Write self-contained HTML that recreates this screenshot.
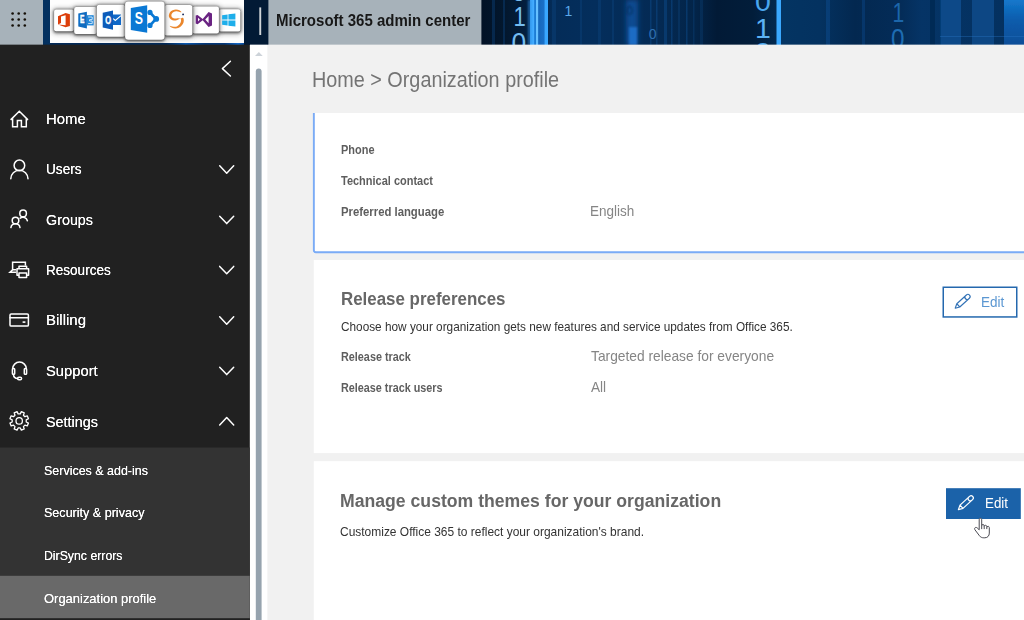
<!DOCTYPE html>
<html lang="en">
<head>
<meta charset="utf-8">
<title>Microsoft 365 admin center</title>
<style>
*{box-sizing:border-box;margin:0;padding:0}
html,body{width:1024px;height:620px;overflow:hidden;background:#f1f1f1;font-family:"Liberation Sans",sans-serif;}
#app{position:relative;width:1024px;height:620px;overflow:hidden;background:#f1f1f1}
.abs{position:absolute}
.t{position:absolute;white-space:nowrap;line-height:40px;height:40px;transform-origin:0 0}
svg{position:absolute;left:0;top:0;overflow:visible}
svg text{font-family:"Liberation Sans",sans-serif}
.ico{fill:none;stroke:#fff;stroke-width:1.5;stroke-linecap:round;stroke-linejoin:round}
</style>
</head>
<body>
<div id="app">

<!-- HEADER -->
<svg id="hdr" width="1024" height="45" viewBox="0 0 1024 45">
<defs>
  <linearGradient id="hbg" x1="0" x2="1" y1="0" y2="0">
    <stop offset="0" stop-color="#021226"/>
    <stop offset=".47" stop-color="#021226"/>
    <stop offset=".495" stop-color="#03182f"/>
    <stop offset=".515" stop-color="#031f40"/>
    <stop offset=".54" stop-color="#042c58"/>
    <stop offset=".58" stop-color="#042e5c"/>
    <stop offset=".64" stop-color="#042a54"/>
    <stop offset=".68" stop-color="#032448"/>
    <stop offset=".70" stop-color="#021a36"/>
    <stop offset=".735" stop-color="#021d3a"/>
    <stop offset=".757" stop-color="#03284e"/>
    <stop offset=".763" stop-color="#043462"/>
    <stop offset=".80" stop-color="#043260"/>
    <stop offset=".835" stop-color="#032850"/>
    <stop offset=".88" stop-color="#042c58"/>
    <stop offset=".90" stop-color="#053466"/>
    <stop offset="1" stop-color="#04305e"/>
  </linearGradient>
  <linearGradient id="band" x1="0" x2="1" y1="0" y2="0">
    <stop offset="0" stop-color="#3aa4fa"/>
    <stop offset=".2" stop-color="#44acff"/>
    <stop offset=".26" stop-color="#1c7cd4"/>
    <stop offset=".32" stop-color="#1c7cd4"/>
    <stop offset=".36" stop-color="#66c0ff"/>
    <stop offset=".43" stop-color="#66c0ff"/>
    <stop offset=".48" stop-color="#1668bc"/>
    <stop offset=".78" stop-color="#1a70c8"/>
    <stop offset=".84" stop-color="#38a6ff"/>
    <stop offset="1" stop-color="#3aa8ff"/>
  </linearGradient>
  <linearGradient id="uline" x1="0" x2="1" y1="0" y2="0">
    <stop offset="0" stop-color="#032a58"/><stop offset=".6" stop-color="#032a58"/><stop offset=".7" stop-color="#0a58b0"/><stop offset=".8" stop-color="#053878"/><stop offset=".9" stop-color="#053878"/><stop offset=".97" stop-color="#1268c8"/><stop offset="1" stop-color="#0a4a98"/>
  </linearGradient>
  <linearGradient id="corner" x1="0" x2="0" y1="0" y2="1"><stop offset="0" stop-color="#1478cc"/><stop offset=".45" stop-color="#0b5cac"/><stop offset="1" stop-color="#084e98"/></linearGradient>
  <filter id="blur05" x="-10%" y="-10%" width="120%" height="120%"><feGaussianBlur stdDeviation="0.7 0"/></filter>
  <filter id="blur1" x="-50%" y="-50%" width="200%" height="200%"><feGaussianBlur stdDeviation="1.2"/></filter>
  <filter id="blur2" x="-50%" y="-50%" width="200%" height="200%"><feGaussianBlur stdDeviation="2.5"/></filter>
  <filter id="tsh" x="-30%" y="-30%" width="160%" height="170%"><feGaussianBlur stdDeviation="0.9"/></filter>
  <filter id="tsh2" x="-50%" y="-50%" width="200%" height="200%"><feGaussianBlur stdDeviation="2.6"/></filter>
  <clipPath id="hclip"><rect x="0" y="0" width="1024" height="45"/></clipPath>
  <clipPath id="sclip"><rect x="50" y="0" width="194" height="43"/></clipPath>
</defs>
<g clip-path="url(#hclip)">
<rect x="0" y="0" width="1024" height="45" fill="url(#hbg)"/>
<!-- stripes -->
<g opacity=".5">
<rect x="492" y="0" width="3" height="45" fill="#0a3c70"/>
<rect x="503" y="0" width="2" height="45" fill="#0a3c70"/>
<rect x="552" y="0" width="4" height="45" fill="#0a4078"/>
<rect x="580" y="0" width="2" height="45" fill="#0a4078"/>
<rect x="598" y="0" width="3" height="45" fill="#0a4078"/>
<rect x="612" y="0" width="2" height="45" fill="#0a4078"/>
<rect x="650" y="0" width="1.5" height="45" fill="#0c4a8a"/>
<rect x="656" y="0" width="1.5" height="45" fill="#0c4a8a"/>
<rect x="664" y="0" width="3" height="45" fill="#0c4a8a"/>
<rect x="671" y="0" width="1.5" height="45" fill="#0c4a8a"/>
<rect x="686" y="0" width="1.5" height="45" fill="#0c4a8a"/>
<rect x="693" y="0" width="1.5" height="45" fill="#0a3c70"/>
<rect x="678" y="0" width="2" height="45" fill="#0a3c70"/>
<rect x="700" y="0" width="3" height="45" fill="#093868"/>
<rect x="826" y="0" width="4" height="45" fill="#0c4c90"/>
<rect x="862" y="0" width="3" height="45" fill="#0a4484"/>
</g>
<!-- bright band -->
<rect x="530" y="0" width="18" height="45" fill="url(#band)"/>
<rect x="528" y="0" width="3" height="45" fill="#2a88dc" opacity=".6" filter="url(#blur1)"/>
<!-- blurry band -->
<rect x="626" y="0" width="12" height="45" fill="#0d4c92" filter="url(#blur2)"/>
<rect x="629" y="27" width="8" height="18" fill="#1a6cc4" filter="url(#blur1)"/>
<text x="626" y="15" font-size="13" fill="#062c58" filter="url(#blur1)">0</text>
<!-- bright line -->
<rect x="776.5" y="0" width="4.5" height="45" fill="#3aa8ff"/>
<g filter="url(#blur05)">
<rect x="930" y="0" width="5" height="45" fill="#032a54"/>
<rect x="940.5" y="0" width="20.5" height="45" fill="#0a4888"/>
<rect x="972" y="0" width="22" height="45" fill="#094684"/>
<rect x="1004" y="0" width="24" height="45" fill="url(#corner)"/>
</g>
<rect x="940" y="36" width="90" height="1" fill="#2a78c8" opacity=".35"/>
<!-- digits -->
<text transform="translate(513.4,25.8) scale(.8,1)" font-size="27.6" fill="#74bcf0">1</text>
<text transform="translate(511.6,53.2) scale(.88,1)" font-size="30" fill="#74bcf0">0</text>
<text transform="translate(511.6,1) scale(.88,1)" font-size="30" fill="#74bcf0">0</text>
<text x="564.5" y="15.8" font-size="14" fill="#5aa8ea">1</text>
<text x="648.8" y="39" font-size="14" fill="#2f6fb0">0</text>
<text x="755" y="10.6" font-size="28.5" fill="#4aa6ee">0</text>
<text x="755" y="37.5" font-size="28.5" fill="#5cb2f4">1</text>
<text x="755" y="62" font-size="28.5" fill="#4aa6ee">0</text>
<text transform="translate(892.6,21.9) scale(.78,1)" font-size="27" fill="#1c66aa">1</text>
<text transform="translate(891,48) scale(.9,1)" font-size="27" fill="#1e6cb2">0</text>
<!-- waffle -->
<rect x="0" y="0" width="43" height="45" fill="#a7b2ba"/>
<g fill="#140e06">
<circle cx="12.6" cy="13.5" r="1.3"/><circle cx="18.7" cy="13.5" r="1.3"/><circle cx="24.8" cy="13.5" r="1.3"/>
<circle cx="12.6" cy="19.5" r="1.3"/><circle cx="18.7" cy="19.5" r="1.3"/><circle cx="24.8" cy="19.5" r="1.3"/>
<circle cx="12.6" cy="25.5" r="1.3"/><circle cx="18.7" cy="25.5" r="1.3"/><circle cx="24.8" cy="25.5" r="1.3"/>
</g>
<rect x="43" y="0" width="7" height="45" fill="#03305f"/>
<rect x="50" y="43" width="194" height="2" fill="url(#uline)"/>
<rect x="244" y="0" width="25" height="45" fill="#021a35"/>
<!-- app strip -->
<rect x="50" y="0" width="194" height="43" fill="#fdfdfd"/>
<g clip-path="url(#sclip)">
<!-- shadows -->
<rect x="53.1" y="8.9" width="21.8" height="24.3" rx="3" fill="#333" opacity=".55" filter="url(#tsh2)"/>
<rect x="53.8" y="9.4" width="20.4" height="23.0" rx="2" fill="#333" opacity=".7" filter="url(#tsh)"/>
<rect x="217.8" y="8.7" width="23.5" height="24.9" rx="3" fill="#333" opacity=".55" filter="url(#tsh2)"/>
<rect x="218.5" y="9.2" width="22.1" height="23.6" rx="2" fill="#333" opacity=".7" filter="url(#tsh)"/>
<rect x="54.1" y="9.4" width="19.8" height="21.8" rx="2" fill="#fff"/>
<rect x="218.8" y="9.2" width="21.5" height="22.4" rx="2" fill="#fff"/>
<rect x="73.2" y="6.5" width="24.7" height="29.5" rx="3" fill="#333" opacity=".55" filter="url(#tsh2)"/>
<rect x="73.9" y="7.0" width="23.3" height="28.2" rx="2" fill="#333" opacity=".7" filter="url(#tsh)"/>
<rect x="191.6" y="6.1" width="28.3" height="29.5" rx="3" fill="#333" opacity=".55" filter="url(#tsh2)"/>
<rect x="192.3" y="6.6" width="26.9" height="28.2" rx="2" fill="#333" opacity=".7" filter="url(#tsh)"/>
<rect x="74.2" y="7" width="22.7" height="27" rx="2" fill="#fff"/>
<rect x="192.6" y="6.6" width="26.3" height="27" rx="2" fill="#fff"/>
<rect x="95.8" y="4.3" width="30.4" height="34.4" rx="3.5" fill="#333" opacity=".55" filter="url(#tsh2)"/>
<rect x="96.5" y="4.8" width="29.0" height="33.1" rx="2.5" fill="#333" opacity=".7" filter="url(#tsh)"/>
<rect x="163.4" y="4.5" width="30.0" height="33.0" rx="3.5" fill="#333" opacity=".55" filter="url(#tsh2)"/>
<rect x="164.1" y="5.0" width="28.6" height="31.7" rx="2.5" fill="#333" opacity=".7" filter="url(#tsh)"/>
<rect x="96.8" y="4.8" width="28.4" height="31.9" rx="2.5" fill="#fff"/>
<rect x="164.4" y="5" width="28" height="30.5" rx="2.5" fill="#fff"/>
<rect x="124.1" y="1.1" width="41.4" height="40.7" rx="4.2" fill="#333" opacity=".55" filter="url(#tsh2)"/>
<rect x="124.8" y="1.6" width="40.0" height="39.4" rx="3.2" fill="#333" opacity=".7" filter="url(#tsh)"/>
<rect x="125.1" y="1.6" width="39.4" height="38.2" rx="3.2" fill="#fff"/>
<!-- Office -->
<path d="M58,16.2 L65.6,12.9 L69.9,14.2 V26 L65.6,27.3 L58,24.4 L65.6,25.2 V15.3 L61,16.4 V23 L58,24.4 Z" fill="#dc3e0a"/>
<!-- Exchange -->
<path d="M78.3,13.6 L86.9,11.7 V28.5 L78.3,26.6 Z" fill="#0f6cc0"/>
<rect x="86.9" y="15.2" width="6.8" height="10.2" fill="#1f86d8"/>
<path d="M88.2,17 h4 v2.6 h-2.6 v1.4 h2.6 v2.6 h-4" fill="none" stroke="#cfe6fa" stroke-width="1"/>
<text transform="translate(80.1,23.4) scale(.66,1)" font-size="10" font-weight="bold" fill="#fff" stroke="#fff" stroke-width=".5">E</text>
<!-- Outlook -->
<path d="M102.7,12.8 L113,10.5 V29.8 L102.7,27.5 Z" fill="#0c5cba"/>
<rect x="113" y="14.5" width="8" height="10.5" fill="#1068c8"/>
<path d="M113.2,18.6 L115.3,20.5 L121,15.7" stroke="#fff" stroke-width="1.1" fill="none"/>
<text transform="translate(105.3,24.1) scale(.74,1)" font-size="10.2" font-weight="bold" fill="#fff" stroke="#fff" stroke-width=".4">O</text>
<!-- SharePoint -->
<path d="M150,12.5 L156,18.9 L150,25.4" fill="none" stroke="#0a78d4" stroke-width="2.6"/>
<circle cx="150" cy="12.4" r="2.6" fill="#0a78d4"/><circle cx="156.2" cy="18.9" r="2.9" fill="#0a78d4"/><circle cx="150" cy="25.4" r="2.6" fill="#0a78d4"/>
<path d="M130.8,8 L147.2,5.3 V32.8 L130.8,30 Z" fill="#0a78d4"/>
<text transform="translate(134.8,24.1) scale(.78,1)" font-size="15.8" font-weight="bold" fill="#fff">S</text>
<!-- Sigma swirl -->
<path d="M181.20,12.25 Q182.00,12.30 180.75,11.25 Q179.50,10.20 177.85,9.80 Q176.20,9.40 174.35,9.70 Q172.50,10.00 171.15,11.10 Q169.80,12.20 169.15,13.90 Q168.50,15.60 169.05,17.10 Q169.60,18.60 171.05,19.50 Q172.50,20.40 174.00,20.50 Q175.50,20.60 177.25,20.00 Q179.00,19.40 180.15,18.85 Q181.30,18.30 182.30,17.80 Q183.30,17.30 183.65,18.90 Q184.00,20.50 183.60,22.15 Q183.20,23.80 181.90,25.35 Q180.60,26.90 178.80,27.75 Q177.00,28.60 175.25,28.55 Q173.50,28.50 172.00,27.75 Q170.50,27.00 169.85,26.20 Q169.20,25.40 170.60,26.00 Q172.00,26.60 173.75,26.80 Q175.50,27.00 176.90,26.40 Q178.30,25.80 179.35,24.60 Q180.40,23.40 180.80,22.00 Q181.20,20.60 181.05,19.75 Q180.90,18.90 179.75,18.45 Q178.60,18.00 177.30,18.30 Q176.00,18.60 174.75,18.50 Q173.50,18.40 172.55,17.70 Q171.60,17.00 171.40,15.90 Q171.20,14.80 171.80,13.70 Q172.40,12.60 173.60,12.00 Q174.80,11.40 176.30,11.30 Q177.80,11.20 179.10,11.70 Q180.40,12.20 181.20,12.25Z" fill="#ea862c"/>
<circle cx="183.1" cy="14.4" r="0.95" fill="#1c2c5a"/>
<!-- Visual Studio -->
<path d="M195.7,15.6 L197.6,14.9 L202.7,19 L208.6,12.1 L212,13.6 V25.4 L208.6,27 L202.7,20.2 L197.6,24.2 L195.7,23.4 Z M198,17.8 V21.4 L199.9,19.6 Z M208.6,16 L205.2,19.6 L208.6,23.2 Z" fill="#6a2382" fill-rule="evenodd"/>
<!-- Windows -->
<path d="M222.1,15.2 L227.6,14.4 V19.6 H222.1 Z M228.4,14.3 L235.4,13.4 V19.6 H228.4 Z M222.1,20.4 H227.6 V25.6 L222.1,24.8 Z M228.4,20.4 H235.4 V26.6 L228.4,25.7 Z" fill="#1eaeea"/>
</g>
<!-- divider -->
<rect x="259.3" y="7.4" width="1.9" height="27.6" fill="#cfd4d8"/>
<!-- title bg -->
<rect x="268.4" y="0" width="213" height="45" fill="#a7b2ba"/>
</g>
</svg>

<!-- SIDEBAR ICONS etc -->
<svg id="icons" width="1024" height="620" viewBox="0 0 1024 620">
<!-- sidebar -->
<rect x="0" y="44.65" width="249.8" height="580" fill="#212121"/>
<rect x="0" y="447.5" width="249.8" height="175" fill="#333"/>
<rect x="0" y="575.8" width="249.8" height="42.6" fill="#696969"/>
<rect x="0" y="618.4" width="249.8" height="3" fill="#212121"/>
<rect x="250" y="44.65" width="17.6" height="580" fill="#fff"/>
<rect x="267.6" y="44.65" width="760" height="580" fill="#f1f1f1"/>
<!-- cards -->
<rect x="313" y="113" width="720" height="140" fill="#fff"/>
<path d="M313.85,113 V250.2 a2,2 0 0 0 2,2 H1030" fill="none" stroke="#7aabf6" stroke-width="1.9"/>
<rect x="313.75" y="260" width="720" height="193.1" fill="#fff"/>
<rect x="313.75" y="461.2" width="720" height="170" fill="#fff"/>
<!-- collapse arrow -->
<path class="ico" d="M230.4,61.2 L222.4,68.6 L230.4,76"/>
<!-- chevrons -->
<path class="ico" d="M219.7,165.8 L226.7,173.2 L233.7,165.8"/>
<path class="ico" d="M219.7,216.2 L226.7,223.6 L233.7,216.2"/>
<path class="ico" d="M219.7,266.4 L226.7,273.8 L233.7,266.4"/>
<path class="ico" d="M219.7,316.8 L226.7,324.2 L233.7,316.8"/>
<path class="ico" d="M219.7,367.2 L226.7,374.6 L233.7,367.2"/>
<path class="ico" d="M219.7,424.9 L226.7,417.5 L233.7,424.9"/>
<!-- home -->
<path class="ico" style="stroke-linecap:butt;stroke-linejoin:miter" d="M10.6,119.9 L19.3,111.3 L28,119.9 M12.6,118.6 V126.8 H17.4 V120.6 H21.4 V126.8 H26.3 V118.6"/>
<!-- user -->
<circle class="ico" cx="19.4" cy="165.4" r="5.3"/>
<path class="ico" d="M10.8,178.8 A8.6,8.6 0 0 1 28,178.8"/>
<!-- groups -->
<circle class="ico" cx="23.1" cy="213.4" r="3.3"/>
<path class="ico" d="M20.2,218.2 A4.6,4.6 0 0 1 27.4,220.8"/>
<circle class="ico" cx="15.5" cy="220.5" r="3.3"/>
<path class="ico" d="M10.9,227.6 A4.6,4.6 0 0 1 20,227.6"/>
<!-- resources -->
<path class="ico" style="stroke-linejoin:miter" d="M25.4,265 V262.2 H12.6 V269.8 L10,272.2 H15.6 M12.6,269.8 H15.6"/>
<path class="ico" d="M19,268.6 V266.2 H26.6 V268.6 M19,275.2 H17 V268.8 H28.6 V275.2 H26.6 M19,273 H26.6 V277.4 H19 Z"/>
<!-- billing -->
<rect class="ico" x="10" y="313.9" width="18.4" height="12.2" rx="1.2"/>
<path class="ico" d="M10,317.7 H28.4"/>
<rect x="22.6" y="321.3" width="2.8" height="1.6" fill="#fff"/>
<!-- support -->
<path class="ico" d="M12.6,369 A6.9,6.9 0 0 1 26.4,369"/>
<rect class="ico" x="12.4" y="368.6" width="2.3" height="5.6" rx=".8"/>
<rect class="ico" x="24.3" y="368.6" width="2.3" height="5.6" rx=".8"/>
<path class="ico" d="M13.4,374.4 C13.6,377 15,378.4 17.6,378.5"/>
<rect class="ico" x="17.6" y="377.2" width="4" height="2.6" rx="1.3"/>
<!-- settings -->
<path class="ico" style="stroke-width:1.3" d="M20.26,413.88 L21.35,411.65 L24.23,412.84 L23.42,415.19 L24.91,416.68 L27.26,415.87 L28.45,418.75 L26.22,419.84 L26.22,421.96 L28.45,423.05 L27.26,425.93 L24.91,425.12 L23.42,426.61 L24.23,428.96 L21.35,430.15 L20.26,427.92 L18.14,427.92 L17.05,430.15 L14.17,428.96 L14.98,426.61 L13.49,425.12 L11.14,425.93 L9.95,423.05 L12.18,421.96 L12.18,419.84 L9.95,418.75 L11.14,415.87 L13.49,416.68 L14.98,415.19 L14.17,412.84 L17.05,411.65 L18.14,413.88Z"/>
<circle class="ico" style="stroke-width:1.3" cx="19.2" cy="420.9" r="3.2"/>
<!-- scrollbar -->
<path d="M255,56 L258.85,52 L262.7,56 Z" fill="#cdd3d9"/>
<rect x="255.8" y="68.5" width="5.8" height="560" rx="2.9" fill="#96a3ae"/>
<!-- buttons -->
<rect x="943.25" y="287.25" width="73.5" height="29.7" fill="#fff" stroke="#2468ae" stroke-width="1.5"/>
<g transform="translate(955.2,308.2) rotate(-42.5)" fill="none" stroke="#3272b6" stroke-width="1.15" stroke-linejoin="round">
<path d="M0,0 L4.2,-2.2 H17.2 A2.2,2.2 0 0 1 17.2,2.2 H4.2 Z M4.2,-2.2 V2.2 M16.2,-2.2 A2.2,2.2 0 0 0 16.2,2.2"/>
</g>
<rect x="946" y="488.2" width="74.8" height="30.8" fill="#1b62a9"/>
<g transform="translate(958.4,509.6) rotate(-42.5)" fill="none" stroke="#fff" stroke-width="1.25" stroke-linejoin="round">
<path d="M0,0 L4.2,-2.2 H17.2 A2.2,2.2 0 0 1 17.2,2.2 H4.2 Z M4.2,-2.2 V2.2 M16.2,-2.2 A2.2,2.2 0 0 0 16.2,2.2"/>
</g>
</svg>
<div class="t" id="title" style="left:275.54px;top:1px;font-size:15.6px;font-weight:bold;color:#181818;transform:scaleX(0.9626);">Microsoft 365 admin center</div>
<div class="t" id="crumb" style="left:311.94px;top:60px;font-size:22.2px;color:#747474;transform:scaleX(0.8923);">Home &gt; Organization profile</div>
<div class="t" id="n1" style="left:45.97px;top:99px;font-size:15.1px;color:#fff;transform:scaleX(0.9856);text-shadow:0 0 .5px #fff">Home</div>
<div class="t" id="n2" style="left:46.07px;top:149px;font-size:15.1px;color:#fff;transform:scaleX(0.9013);text-shadow:0 0 .5px #fff">Users</div>
<div class="t" id="n3" style="left:45.99px;top:200px;font-size:15.1px;color:#fff;transform:scaleX(0.9492);text-shadow:0 0 .5px #fff">Groups</div>
<div class="t" id="n4" style="left:46.08px;top:250px;font-size:15.1px;color:#fff;transform:scaleX(0.8975);text-shadow:0 0 .5px #fff">Resources</div>
<div class="t" id="n5" style="left:45.96px;top:300px;font-size:15.1px;color:#fff;transform:scaleX(0.9947);text-shadow:0 0 .5px #fff">Billing</div>
<div class="t" id="n6" style="left:45.97px;top:351px;font-size:15.1px;color:#fff;transform:scaleX(0.9769);text-shadow:0 0 .5px #fff">Support</div>
<div class="t" id="n7" style="left:45.98px;top:402px;font-size:15.1px;color:#fff;transform:scaleX(0.9540);text-shadow:0 0 .5px #fff">Settings</div>
<div class="t" id="s1" style="left:44.06px;top:451px;font-size:13.6px;color:#fff;transform:scaleX(0.9174);text-shadow:0 0 .6px #fff">Services &amp; add-ins</div>
<div class="t" id="s2" style="left:44.06px;top:493px;font-size:13.6px;color:#fff;transform:scaleX(0.9236);text-shadow:0 0 .6px #fff">Security &amp; privacy</div>
<div class="t" id="s3" style="left:44.10px;top:536px;font-size:13.6px;color:#fff;transform:scaleX(0.9032);text-shadow:0 0 .6px #fff">DirSync errors</div>
<div class="t" id="s4" style="left:43.79px;top:579px;font-size:13.6px;color:#fff;transform:scaleX(0.9528);text-shadow:0 0 .6px #fff">Organization profile</div>
<div class="t" id="l1" style="left:341.24px;top:130px;font-size:12.4px;font-weight:bold;color:#5e5e5e;transform:scaleX(0.8844);">Phone</div>
<div class="t" id="l2" style="left:341.38px;top:161px;font-size:12.4px;font-weight:bold;color:#5e5e5e;transform:scaleX(0.8862);">Technical contact</div>
<div class="t" id="l3" style="left:341.21px;top:192px;font-size:12.4px;font-weight:bold;color:#5e5e5e;transform:scaleX(0.9136);">Preferred language</div>
<div class="t" id="v1" style="left:590.44px;top:191px;font-size:14.5px;color:#858585;transform:scaleX(0.9315);">English</div>
<div class="t" id="h1" style="left:340.69px;top:279px;font-size:17.5px;font-weight:bold;color:#676767;transform:scaleX(0.9658);">Release preferences</div>
<div class="t" id="p1" style="left:340.89px;top:307px;font-size:12.4px;color:#333;transform:scaleX(0.9524);">Choose how your organization gets new features and service updates from Office 365.</div>
<div class="t" id="l4" style="left:340.94px;top:337px;font-size:12.4px;font-weight:bold;color:#5e5e5e;transform:scaleX(0.8734);">Release track</div>
<div class="t" id="l5" style="left:340.95px;top:368px;font-size:12.4px;font-weight:bold;color:#5e5e5e;transform:scaleX(0.8722);">Release track users</div>
<div class="t" id="v2" style="left:591.36px;top:336px;font-size:14.5px;color:#858585;transform:scaleX(0.9502);">Targeted release for everyone</div>
<div class="t" id="v3" style="left:590.90px;top:367px;font-size:14.5px;color:#858585;transform:scaleX(0.9400);">All</div>
<div class="t" id="h2" style="left:340.48px;top:481px;font-size:18px;font-weight:bold;color:#676767;transform:scaleX(0.9797);">Manage custom themes for your organization</div>
<div class="t" id="p2" style="left:340.28px;top:512px;font-size:12.4px;color:#333;transform:scaleX(0.9658);">Customize Office 365 to reflect your organization's brand.</div>
<div class="t" id="e1" style="left:981.30px;top:282px;font-size:15.4px;color:#5b97d2;transform:scaleX(0.8792);">Edit</div>
<div class="t" id="e2" style="left:984.72px;top:483px;font-size:15.4px;color:#fff;transform:scaleX(0.8673);">Edit</div>
<!-- cursor -->
<svg id="cur" width="1024" height="620" viewBox="0 0 1024 620">
<g transform="translate(974,517.3)">
<path d="M6.5,1 C5.6,1 5.2,1.6 5.2,2.4 L5.2,12.5 L3.2,10.6 C2.4,9.9 1.4,10 0.9,10.6 C0.4,11.3 0.6,12 1.1,12.7 L5.5,18.5 C6.5,19.9 8,20.5 9.8,20.5 L10.8,20.5 C13.6,20.5 15.3,18.5 15.3,15.8 L15.3,10.5 C15.3,9.6 14.8,9 14,9 C13.3,9 12.8,9.5 12.8,10.2 L12.8,9.3 C12.8,8.5 12.2,8 11.5,8 C10.7,8 10.2,8.5 10.2,9.2 L10.2,8.5 C10.2,7.7 9.7,7.2 8.9,7.2 C8.2,7.2 7.7,7.7 7.7,8.4 L7.7,2.4 C7.7,1.6 7.3,1 6.5,1 Z" fill="#fff" stroke="#4a4a52" stroke-width="1" stroke-linejoin="round"/>
<path d="M7.7,8.4 V11.8 M10.2,9.2 V11.8 M12.8,10.2 V11.8" fill="none" stroke="#4a4a52" stroke-width="1"/>
</g>
</svg>
</div>
</body>
</html>
